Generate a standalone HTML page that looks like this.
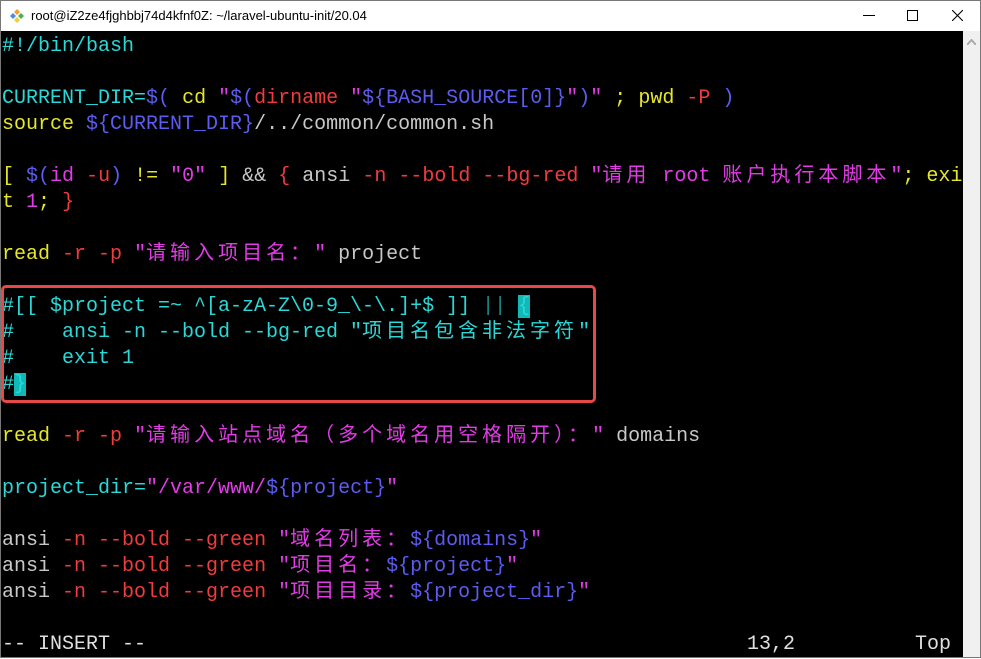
<!DOCTYPE html>
<html><head><meta charset="utf-8"><style>
html,body{margin:0;padding:0;width:981px;height:658px;overflow:hidden;background:#fff}
#win{position:absolute;left:0;top:0;width:979px;height:656px;border:1px solid #777;background:#000}
#title{position:absolute;left:0;top:0;width:979px;height:30px;background:#fff;font:13px "Liberation Sans","Noto Sans CJK SC",sans-serif;color:#000}
#title .t{position:absolute;left:30px;top:7px}
#sb{position:absolute;left:962px;top:30px;width:17px;height:626px;background:#f0f0f0}
.l{position:absolute;left:1px;height:26px;line-height:26px;font:20px "Liberation Mono","Noto Sans CJK SC",monospace;white-space:pre;color:#c0c0c0;overflow:visible}
.z{display:inline-block;height:26px;line-height:26px;vertical-align:top;position:relative;top:-5px;letter-spacing:4px;font-family:"Noto Sans CJK SC",sans-serif;font-size:20px}
.c{color:#2ad8d8}.y{color:#e6e62a}.r{color:#f03c3c}.b{color:#5c5cf0}.m{color:#e23ce6}.w{color:#c8c8c8}
.cur{background:#10b8b8}
#box{position:absolute;left:0;top:284px;width:589px;height:112px;border:3px solid #e84848;border-radius:5px}
</style></head><body><div id="win">
<div id="title">
<svg style="position:absolute;left:8px;top:7px" width="16" height="16" viewBox="0 0 16 16"><path d="M8 1l3 3-3 3-3-3z" fill="#f4a030"/><path d="M1 8l3-3 3 3-3 3z" fill="#4a8ae8"/><path d="M15 8l-3 3-3-3 3-3z" fill="#50b050"/><path d="M8 15l-3-3 3-3 3 3z" fill="#e8d040"/></svg>
<span class="t">root@iZ2ze4fjghbbj74d4kfnf0Z: ~/laravel-ubuntu-init/20.04</span>
<div style="position:absolute;left:862px;top:14px;width:12px;height:1px;background:#000"></div>
<div style="position:absolute;left:906px;top:9px;width:9px;height:9px;border:1px solid #000"></div>
<svg style="position:absolute;left:951px;top:9px" width="11" height="11"><path d="M0 0L11 11M11 0L0 11" stroke="#000" stroke-width="1.1"/></svg>
</div>
<div id="sb"><svg style="position:absolute;left:4px;top:8px" width="9" height="6"><path d="M0 6L4.5 1L9 6" stroke="#aaa" stroke-width="2" fill="none"/></svg></div>

<div class="l c" style="top:34px">#!/bin/bash</div>
<div class="l" style="top:86px"><span class="c">CURRENT_DIR=</span><span class="b">$(</span> <span class="y">cd</span> <span class="m">"</span><span class="b">$(</span><span class="r">dirname</span> <span class="m">"</span><span class="b">${BASH_SOURCE[0]}</span><span class="m">"</span><span class="b">)</span><span class="m">"</span> <span class="y">;</span> <span class="y">pwd</span> <span class="r">-P</span> <span class="b">)</span></div>
<div class="l" style="top:112px"><span class="y">source</span> <span class="b">${CURRENT_DIR}</span><span class="w">/../common/common.sh</span></div>
<div class="l" style="top:164px"><span class="y">[</span> <span class="b">$(</span><span class="m">id</span> <span class="r">-u</span><span class="b">)</span> <span class="y">!=</span> <span class="m">"0"</span> <span class="y">]</span> <span class="w">&amp;&amp;</span> <span class="r">{</span> <span class="w">ansi</span> <span class="r">-n --bold --bg-red</span> <span class="m">"<span class="z">请用</span> root <span class="z">账户执行本脚本</span>"</span><span class="y">; exi</span></div>
<div class="l" style="top:190px"><span class="y">t</span> <span class="m">1</span><span class="y">;</span> <span class="r">}</span></div>
<div class="l" style="top:242px"><span class="y">read</span> <span class="r">-r -p</span> <span class="m">"<span class="z">请输入项目名：</span>"</span> <span class="w">project</span></div>
<div class="l c" style="top:294px">#[[ $project =~ ^[a-zA-Z\0-9_\-\.]+$ ]] <span style="color:#1a8a8a">||</span> <span class="cur">{</span></div>
<div class="l c" style="top:320px">#    ansi -n --bold --bg-red "<span class="z">项目名包含非法字符</span>"</div>
<div class="l c" style="top:346px">#    exit 1</div>
<div class="l c" style="top:372px">#<span class="cur">}</span></div>
<div id="box"></div>
<div class="l" style="top:424px"><span class="y">read</span> <span class="r">-r -p</span> <span class="m">"<span class="z">请输入站点域名（多个域名用空格隔开）：</span>"</span> <span class="w">domains</span></div>
<div class="l" style="top:476px"><span class="c">project_dir=</span><span class="m">"/var/www/</span><span class="b">${project}</span><span class="m">"</span></div>
<div class="l" style="top:528px"><span class="w">ansi</span> <span class="r">-n --bold --green</span> <span class="m">"<span class="z">域名列表：</span></span><span class="b">${domains}</span><span class="m">"</span></div>
<div class="l" style="top:554px"><span class="w">ansi</span> <span class="r">-n --bold --green</span> <span class="m">"<span class="z">项目名：</span></span><span class="b">${project}</span><span class="m">"</span></div>
<div class="l" style="top:580px"><span class="w">ansi</span> <span class="r">-n --bold --green</span> <span class="m">"<span class="z">项目目录：</span></span><span class="b">${project_dir}</span><span class="m">"</span></div>
<div class="l" style="top:632px;color:#e0e0e0">-- INSERT --</div>
<div class="l" style="top:632px;left:746px;color:#e0e0e0">13,2</div>
<div class="l" style="top:632px;left:914px;color:#e0e0e0">Top</div>
</div></body></html>
